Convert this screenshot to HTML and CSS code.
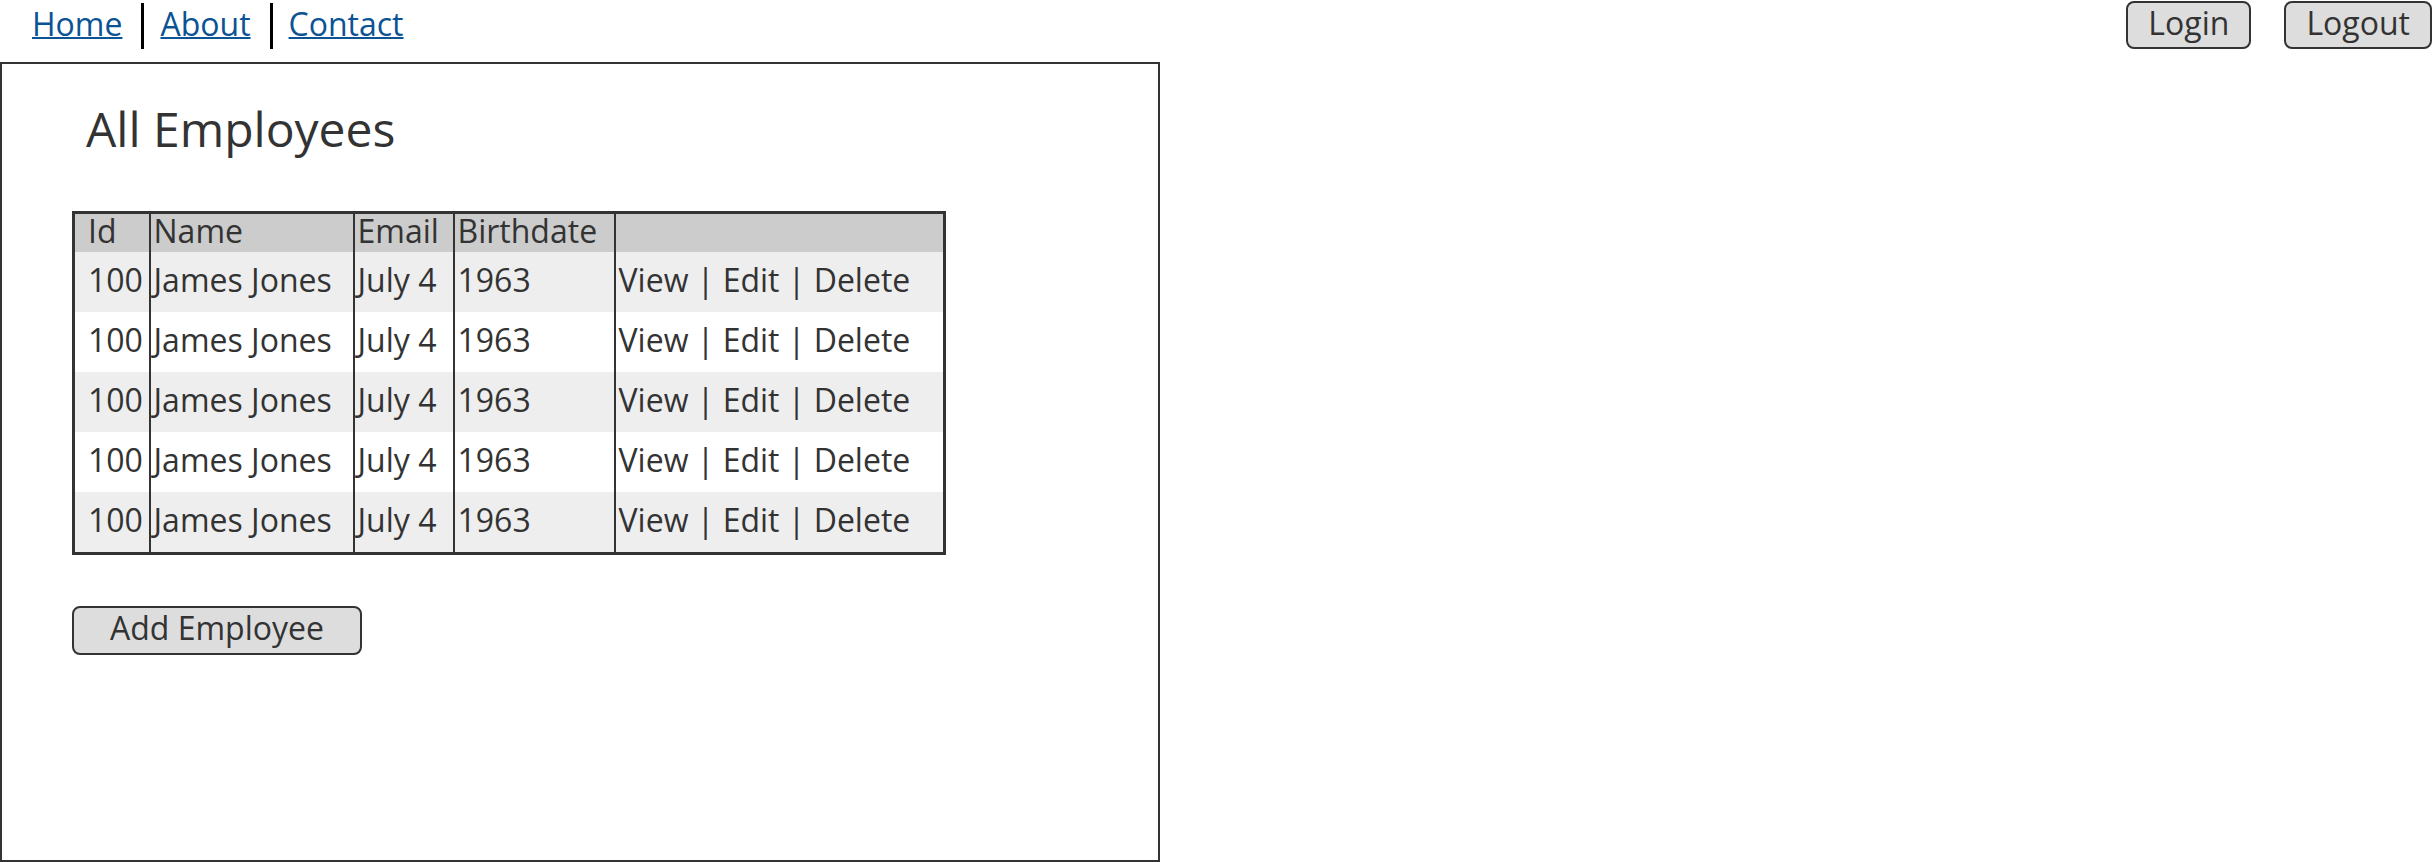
FILE: index.html
```html
<!DOCTYPE html>
<html lang="en">
<head>
<meta charset="utf-8">
<title>All Employees</title>
<link rel="stylesheet" href="styles.css">
</head>
<body>
<header class="topbar">
  <ul class="nav">
    <li><a href="#">Home</a></li>
    <li><a href="#">About</a></li>
    <li><a href="#">Contact</a></li>
  </ul>
  <div class="auth">
    <button class="btn">Login</button>
    <button class="btn">Logout</button>
  </div>
</header>
<main class="panel">
  <h1 class="title">All Employees</h1>
  <table class="grid">
    <colgroup>
      <col class="c-id"><col class="c-name"><col class="c-email"><col class="c-birth"><col class="c-act">
    </colgroup>
    <thead>
      <tr><th class="id">Id</th><th>Name</th><th>Email</th><th>Birthdate</th><th></th></tr>
    </thead>
    <tbody>
      <tr><td class="id">100</td><td>James Jones</td><td>July 4</td><td>1963</td><td>View | Edit | Delete</td></tr>
      <tr><td class="id">100</td><td>James Jones</td><td>July 4</td><td>1963</td><td>View | Edit | Delete</td></tr>
      <tr><td class="id">100</td><td>James Jones</td><td>July 4</td><td>1963</td><td>View | Edit | Delete</td></tr>
      <tr><td class="id">100</td><td>James Jones</td><td>July 4</td><td>1963</td><td>View | Edit | Delete</td></tr>
      <tr><td class="id">100</td><td>James Jones</td><td>July 4</td><td>1963</td><td>View | Edit | Delete</td></tr>
    </tbody>
  </table>
  <button class="btn add">Add Employee</button>
</main>
</body>
</html>
```
FILE: styles.css
```css
html, body {
  margin: 0;
  padding: 0;
  background: #fff;
}
body {
  font-family: "Open Sans", "Liberation Sans", sans-serif;
  color: #333;
  font-size: 32px;
}
.topbar {
  display: flex;
  justify-content: space-between;
  align-items: flex-start;
  height: 62px;
}
.nav {
  list-style: none;
  margin: 0;
  padding: 3px 0 0 16px;
  display: flex;
}
.nav li {
  padding: 0 19px 4px 16px;
  line-height: 42px;
  font-size: 32px;
}
.nav li + li {
  border-left: 3px solid #000;
}
.nav a {
  color: #0b5394;
  text-decoration: underline;
  text-decoration-thickness: 2px;
}
.auth {
  display: flex;
  gap: 33px;
  padding: 1px 0 0 0;
}
.btn {
  font-family: "Open Sans", "Liberation Sans", sans-serif;
  font-size: 32px;
  line-height: 40px;
  color: #333;
  background: #ddd;
  border: 2px solid #333;
  border-radius: 8px;
  padding: 0 20px 4px;
  margin: 0;
}
.panel {
  display: block;
  box-sizing: border-box;
  width: 1160px;
  height: 800px;
  border: 2px solid #333;
  padding: 0 0 0 70px;
}
.title {
  font-size: 48px;
  font-weight: 400;
  line-height: normal;
  margin: 32px 0 50px 14px;
}
.grid {
  border-collapse: collapse;
  table-layout: fixed;
  width: 871px;
  border: 3px solid #333;
}
.c-id { width: 76px; }
.c-name { width: 204px; }
.c-email { width: 100px; }
.c-birth { width: 161px; }
.c-act { width: 330px; }
.grid th, .grid td {
  border-left: 2px solid #333;
  border-right: 2px solid #333;
  text-align: left;
  font-weight: 400;
  white-space: nowrap;
}
.grid th {
  background: #ccc;
  line-height: 33px;
  padding: 0 0 5px 3px;
}
.grid td {
  line-height: 55px;
  padding: 0 0 5px 3px;
}
.grid .id {
  padding-left: 13px;
}
.grid tbody tr:nth-child(odd) td {
  background: #eee;
}
.add {
  display: block;
  margin-top: 51px;
  padding: 0 36px 5px;
}
```
